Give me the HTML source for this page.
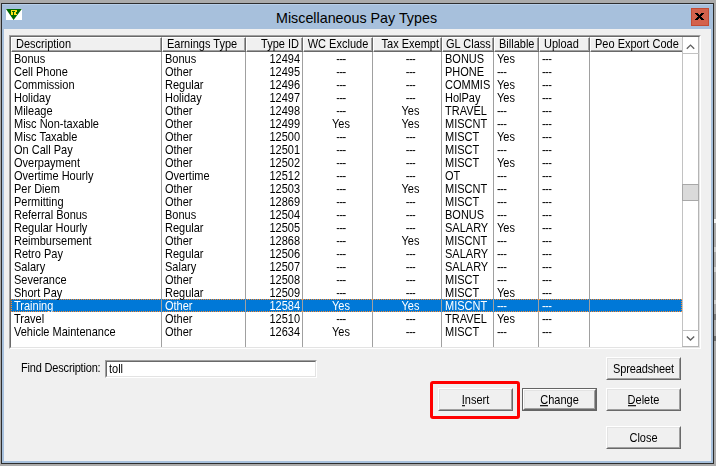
<!DOCTYPE html><html><head><meta charset="utf-8"><style>
*{margin:0;padding:0;box-sizing:border-box}
html,body{width:716px;height:466px;overflow:hidden;background:#ababab;font-family:"Liberation Sans",sans-serif;font-size:11px;color:#000}
.a{position:absolute}
.t{position:absolute;white-space:nowrap;line-height:13px;height:13px;transform:translateY(1px) scaleY(1.125);transform-origin:0 10px;will-change:transform}
.tt{position:absolute;white-space:nowrap}
.frame{left:1px;top:3px;width:713px;height:461px;border:1px solid #2d2d2d;background:#a7c0dc}
.client{left:4px;top:29px;width:707px;height:432px;background:#f0f0f0}
.sunken{border-style:solid;border-width:1px;border-color:#a0a0a0 #fff #fff #a0a0a0}
.sunken2{border-style:solid;border-width:1px;border-color:#696969 #e3e3e3 #e3e3e3 #696969}
.hdr{position:absolute;top:37px;height:15px;background:#f0f0f0;border-style:solid;border-width:1px;border-color:#fff #696969 #696969 #fff}
.hdr i{position:absolute;left:0;top:0;right:0;bottom:0;border-style:solid;border-width:0 1px 1px 0;border-color:#a0a0a0}
.grid{position:absolute;top:52px;width:1px;height:295px;background:#a0a0a0}
.btn{position:absolute;width:75px;height:23px;background:#f0f0f0;border-style:solid;border-width:1px;border-color:#fff #696969 #696969 #fff}
.btn i{position:absolute;left:0;top:0;right:0;bottom:0;border-style:solid;border-width:1px;border-color:#e3e3e3 #a0a0a0 #a0a0a0 #e3e3e3}
.btn span{position:absolute;left:0;right:0;top:4px;text-align:center;line-height:13px;transform:translateY(1px) scaleY(1.125);transform-origin:0 10px;will-change:transform}
.btn u{text-decoration:none;position:relative}
.btn u::after{content:'';position:absolute;left:0;right:0;top:10.89px;height:0.89px;background:#000}
</style></head><body>
<div class="a frame"></div>
<div class="a" style="left:2px;top:4px;width:711px;height:1px;background:#b8cfe9"></div>
<svg class="a" style="left:6px;top:9px" width="16" height="11" viewBox="0 0 16 11">
<rect x="0" y="0" width="16" height="11" fill="#fff"/>
<polygon points="0,0 15.8,0 7.6,11" fill="#006800"/>
<g fill="#ffe41a" shape-rendering="crispEdges"><rect x="5" y="1" width="1" height="1"/><rect x="6" y="1" width="1" height="1"/><rect x="7" y="1" width="1" height="1"/><rect x="8" y="1" width="1" height="1"/><rect x="9" y="1" width="1" height="1"/><rect x="10" y="1" width="1" height="1"/><rect x="5" y="2" width="1" height="1"/><rect x="9" y="2" width="1" height="1"/><rect x="10" y="2" width="1" height="1"/><rect x="5" y="3" width="1" height="1"/><rect x="6" y="3" width="1" height="1"/><rect x="8" y="3" width="1" height="1"/><rect x="9" y="3" width="1" height="1"/><rect x="5" y="4" width="1" height="1"/><rect x="6" y="4" width="1" height="1"/><rect x="8" y="4" width="1" height="1"/><rect x="9" y="4" width="1" height="1"/><rect x="5" y="5" width="1" height="1"/><rect x="6" y="5" width="1" height="1"/><rect x="8" y="5" width="1" height="1"/><rect x="9" y="5" width="1" height="1"/><rect x="10" y="5" width="1" height="1"/></g>
</svg>
<div class="tt" style="left:276px;top:8px;font-size:14.3px;line-height:20px;height:20px">Miscellaneous Pay Types</div>
<div class="a" style="left:691px;top:8px;width:18px;height:18px;background:#d3624c;border:1px solid #c24b34"></div>
<svg class="a" style="left:691px;top:8px" width="18" height="18" shape-rendering="crispEdges"><g fill="#000"><rect x="4" y="5" width="3" height="1"/><rect x="10" y="5" width="3" height="1"/><rect x="5" y="6" width="3" height="1"/><rect x="9" y="6" width="3" height="1"/><rect x="6" y="7" width="5" height="1"/><rect x="7" y="8" width="3" height="1"/><rect x="6" y="9" width="5" height="1"/><rect x="5" y="10" width="3" height="1"/><rect x="9" y="10" width="3" height="1"/><rect x="4" y="11" width="3" height="1"/><rect x="10" y="11" width="3" height="1"/></g></svg>
<div class="a client"></div>
<div class="a sunken" style="left:9px;top:35px;width:692px;height:314px;background:#fff"><div class="sunken2" style="width:690px;height:312px"></div></div>
<div class="hdr" style="left:11px;width:151px"><i></i></div>
<div class="t" style="left:16px;top:37px">Description</div>
<div class="hdr" style="left:162px;width:84px"><i></i></div>
<div class="t" style="left:167px;top:37px">Earnings Type</div>
<div class="hdr" style="left:246px;width:57px"><i></i></div>
<div class="t" style="left:246px;width:53px;top:37px;text-align:right">Type ID</div>
<div class="hdr" style="left:303px;width:70px"><i></i></div>
<div class="t" style="left:303px;width:70px;top:37px;text-align:center">WC Exclude</div>
<div class="hdr" style="left:373px;width:69px"><i></i></div>
<div class="t" style="left:373px;width:66px;top:37px;text-align:right">Tax Exempt</div>
<div class="hdr" style="left:442px;width:52px"><i></i></div>
<div class="t" style="left:446px;top:37px">GL Class</div>
<div class="hdr" style="left:494px;width:45px"><i></i></div>
<div class="t" style="left:499px;top:37px">Billable</div>
<div class="hdr" style="left:539px;width:51px"><i></i></div>
<div class="t" style="left:544px;top:37px">Upload</div>
<div class="hdr" style="left:590px;width:102px;border-right:none"><i style="border-right:none"></i></div>
<div class="t" style="left:595px;top:37px">Peo Export Code</div>
<div class="a" style="left:11px;top:299px;width:671px;height:13px;background:#0078d7"></div>
<div class="a" style="left:11px;top:299px;width:671px;height:13px;border:1px dotted #ff8a2a"></div>
<div class="grid" style="left:161px"></div>
<div class="grid" style="left:245px"></div>
<div class="grid" style="left:302px"></div>
<div class="grid" style="left:372px"></div>
<div class="grid" style="left:441px"></div>
<div class="grid" style="left:493px"></div>
<div class="grid" style="left:538px"></div>
<div class="grid" style="left:589px"></div>
<div class="t" style="left:14px;top:52px;color:#000">Bonus</div>
<div class="t" style="left:165px;top:52px;color:#000">Bonus</div>
<div class="t" style="left:246px;width:54px;top:52px;text-align:right;color:#000">12494</div>
<div class="t" style="left:306px;width:70px;top:52px;text-align:center;color:#000"><span style="letter-spacing:-0.55px">---</span></div>
<div class="t" style="left:376px;width:69px;top:52px;text-align:center;color:#000"><span style="letter-spacing:-0.55px">---</span></div>
<div class="t" style="left:445px;top:52px;color:#000">BONUS</div>
<div class="t" style="left:497px;top:52px;color:#000">Yes</div>
<div class="t" style="left:542px;top:52px;color:#000"><span style="letter-spacing:-0.55px">---</span></div>
<div class="t" style="left:14px;top:65px;color:#000">Cell Phone</div>
<div class="t" style="left:165px;top:65px;color:#000">Other</div>
<div class="t" style="left:246px;width:54px;top:65px;text-align:right;color:#000">12495</div>
<div class="t" style="left:306px;width:70px;top:65px;text-align:center;color:#000"><span style="letter-spacing:-0.55px">---</span></div>
<div class="t" style="left:376px;width:69px;top:65px;text-align:center;color:#000"><span style="letter-spacing:-0.55px">---</span></div>
<div class="t" style="left:445px;top:65px;color:#000">PHONE</div>
<div class="t" style="left:497px;top:65px;color:#000"><span style="letter-spacing:-0.55px">---</span></div>
<div class="t" style="left:542px;top:65px;color:#000"><span style="letter-spacing:-0.55px">---</span></div>
<div class="t" style="left:14px;top:78px;color:#000">Commission</div>
<div class="t" style="left:165px;top:78px;color:#000">Regular</div>
<div class="t" style="left:246px;width:54px;top:78px;text-align:right;color:#000">12496</div>
<div class="t" style="left:306px;width:70px;top:78px;text-align:center;color:#000"><span style="letter-spacing:-0.55px">---</span></div>
<div class="t" style="left:376px;width:69px;top:78px;text-align:center;color:#000"><span style="letter-spacing:-0.55px">---</span></div>
<div class="t" style="left:445px;top:78px;color:#000">COMMIS</div>
<div class="t" style="left:497px;top:78px;color:#000">Yes</div>
<div class="t" style="left:542px;top:78px;color:#000"><span style="letter-spacing:-0.55px">---</span></div>
<div class="t" style="left:14px;top:91px;color:#000">Holiday</div>
<div class="t" style="left:165px;top:91px;color:#000">Holiday</div>
<div class="t" style="left:246px;width:54px;top:91px;text-align:right;color:#000">12497</div>
<div class="t" style="left:306px;width:70px;top:91px;text-align:center;color:#000"><span style="letter-spacing:-0.55px">---</span></div>
<div class="t" style="left:376px;width:69px;top:91px;text-align:center;color:#000"><span style="letter-spacing:-0.55px">---</span></div>
<div class="t" style="left:445px;top:91px;color:#000">HolPay</div>
<div class="t" style="left:497px;top:91px;color:#000">Yes</div>
<div class="t" style="left:542px;top:91px;color:#000"><span style="letter-spacing:-0.55px">---</span></div>
<div class="t" style="left:14px;top:104px;color:#000">Mileage</div>
<div class="t" style="left:165px;top:104px;color:#000">Other</div>
<div class="t" style="left:246px;width:54px;top:104px;text-align:right;color:#000">12498</div>
<div class="t" style="left:306px;width:70px;top:104px;text-align:center;color:#000"><span style="letter-spacing:-0.55px">---</span></div>
<div class="t" style="left:376px;width:69px;top:104px;text-align:center;color:#000">Yes</div>
<div class="t" style="left:445px;top:104px;color:#000">TRAVEL</div>
<div class="t" style="left:497px;top:104px;color:#000"><span style="letter-spacing:-0.55px">---</span></div>
<div class="t" style="left:542px;top:104px;color:#000"><span style="letter-spacing:-0.55px">---</span></div>
<div class="t" style="left:14px;top:117px;color:#000">Misc Non-taxable</div>
<div class="t" style="left:165px;top:117px;color:#000">Other</div>
<div class="t" style="left:246px;width:54px;top:117px;text-align:right;color:#000">12499</div>
<div class="t" style="left:306px;width:70px;top:117px;text-align:center;color:#000">Yes</div>
<div class="t" style="left:376px;width:69px;top:117px;text-align:center;color:#000">Yes</div>
<div class="t" style="left:445px;top:117px;color:#000">MISCNT</div>
<div class="t" style="left:497px;top:117px;color:#000"><span style="letter-spacing:-0.55px">---</span></div>
<div class="t" style="left:542px;top:117px;color:#000"><span style="letter-spacing:-0.55px">---</span></div>
<div class="t" style="left:14px;top:130px;color:#000">Misc Taxable</div>
<div class="t" style="left:165px;top:130px;color:#000">Other</div>
<div class="t" style="left:246px;width:54px;top:130px;text-align:right;color:#000">12500</div>
<div class="t" style="left:306px;width:70px;top:130px;text-align:center;color:#000"><span style="letter-spacing:-0.55px">---</span></div>
<div class="t" style="left:376px;width:69px;top:130px;text-align:center;color:#000"><span style="letter-spacing:-0.55px">---</span></div>
<div class="t" style="left:445px;top:130px;color:#000">MISCT</div>
<div class="t" style="left:497px;top:130px;color:#000">Yes</div>
<div class="t" style="left:542px;top:130px;color:#000"><span style="letter-spacing:-0.55px">---</span></div>
<div class="t" style="left:14px;top:143px;color:#000">On Call Pay</div>
<div class="t" style="left:165px;top:143px;color:#000">Other</div>
<div class="t" style="left:246px;width:54px;top:143px;text-align:right;color:#000">12501</div>
<div class="t" style="left:306px;width:70px;top:143px;text-align:center;color:#000"><span style="letter-spacing:-0.55px">---</span></div>
<div class="t" style="left:376px;width:69px;top:143px;text-align:center;color:#000"><span style="letter-spacing:-0.55px">---</span></div>
<div class="t" style="left:445px;top:143px;color:#000">MISCT</div>
<div class="t" style="left:497px;top:143px;color:#000"><span style="letter-spacing:-0.55px">---</span></div>
<div class="t" style="left:542px;top:143px;color:#000"><span style="letter-spacing:-0.55px">---</span></div>
<div class="t" style="left:14px;top:156px;color:#000">Overpayment</div>
<div class="t" style="left:165px;top:156px;color:#000">Other</div>
<div class="t" style="left:246px;width:54px;top:156px;text-align:right;color:#000">12502</div>
<div class="t" style="left:306px;width:70px;top:156px;text-align:center;color:#000"><span style="letter-spacing:-0.55px">---</span></div>
<div class="t" style="left:376px;width:69px;top:156px;text-align:center;color:#000"><span style="letter-spacing:-0.55px">---</span></div>
<div class="t" style="left:445px;top:156px;color:#000">MISCT</div>
<div class="t" style="left:497px;top:156px;color:#000">Yes</div>
<div class="t" style="left:542px;top:156px;color:#000"><span style="letter-spacing:-0.55px">---</span></div>
<div class="t" style="left:14px;top:169px;color:#000">Overtime Hourly</div>
<div class="t" style="left:165px;top:169px;color:#000">Overtime</div>
<div class="t" style="left:246px;width:54px;top:169px;text-align:right;color:#000">12512</div>
<div class="t" style="left:306px;width:70px;top:169px;text-align:center;color:#000"><span style="letter-spacing:-0.55px">---</span></div>
<div class="t" style="left:376px;width:69px;top:169px;text-align:center;color:#000"><span style="letter-spacing:-0.55px">---</span></div>
<div class="t" style="left:445px;top:169px;color:#000">OT</div>
<div class="t" style="left:497px;top:169px;color:#000"><span style="letter-spacing:-0.55px">---</span></div>
<div class="t" style="left:542px;top:169px;color:#000"><span style="letter-spacing:-0.55px">---</span></div>
<div class="t" style="left:14px;top:182px;color:#000">Per Diem</div>
<div class="t" style="left:165px;top:182px;color:#000">Other</div>
<div class="t" style="left:246px;width:54px;top:182px;text-align:right;color:#000">12503</div>
<div class="t" style="left:306px;width:70px;top:182px;text-align:center;color:#000"><span style="letter-spacing:-0.55px">---</span></div>
<div class="t" style="left:376px;width:69px;top:182px;text-align:center;color:#000">Yes</div>
<div class="t" style="left:445px;top:182px;color:#000">MISCNT</div>
<div class="t" style="left:497px;top:182px;color:#000"><span style="letter-spacing:-0.55px">---</span></div>
<div class="t" style="left:542px;top:182px;color:#000"><span style="letter-spacing:-0.55px">---</span></div>
<div class="t" style="left:14px;top:195px;color:#000">Permitting</div>
<div class="t" style="left:165px;top:195px;color:#000">Other</div>
<div class="t" style="left:246px;width:54px;top:195px;text-align:right;color:#000">12869</div>
<div class="t" style="left:306px;width:70px;top:195px;text-align:center;color:#000"><span style="letter-spacing:-0.55px">---</span></div>
<div class="t" style="left:376px;width:69px;top:195px;text-align:center;color:#000"><span style="letter-spacing:-0.55px">---</span></div>
<div class="t" style="left:445px;top:195px;color:#000">MISCT</div>
<div class="t" style="left:497px;top:195px;color:#000"><span style="letter-spacing:-0.55px">---</span></div>
<div class="t" style="left:542px;top:195px;color:#000"><span style="letter-spacing:-0.55px">---</span></div>
<div class="t" style="left:14px;top:208px;color:#000">Referral Bonus</div>
<div class="t" style="left:165px;top:208px;color:#000">Bonus</div>
<div class="t" style="left:246px;width:54px;top:208px;text-align:right;color:#000">12504</div>
<div class="t" style="left:306px;width:70px;top:208px;text-align:center;color:#000"><span style="letter-spacing:-0.55px">---</span></div>
<div class="t" style="left:376px;width:69px;top:208px;text-align:center;color:#000"><span style="letter-spacing:-0.55px">---</span></div>
<div class="t" style="left:445px;top:208px;color:#000">BONUS</div>
<div class="t" style="left:497px;top:208px;color:#000"><span style="letter-spacing:-0.55px">---</span></div>
<div class="t" style="left:542px;top:208px;color:#000"><span style="letter-spacing:-0.55px">---</span></div>
<div class="t" style="left:14px;top:221px;color:#000">Regular Hourly</div>
<div class="t" style="left:165px;top:221px;color:#000">Regular</div>
<div class="t" style="left:246px;width:54px;top:221px;text-align:right;color:#000">12505</div>
<div class="t" style="left:306px;width:70px;top:221px;text-align:center;color:#000"><span style="letter-spacing:-0.55px">---</span></div>
<div class="t" style="left:376px;width:69px;top:221px;text-align:center;color:#000"><span style="letter-spacing:-0.55px">---</span></div>
<div class="t" style="left:445px;top:221px;color:#000">SALARY</div>
<div class="t" style="left:497px;top:221px;color:#000">Yes</div>
<div class="t" style="left:542px;top:221px;color:#000"><span style="letter-spacing:-0.55px">---</span></div>
<div class="t" style="left:14px;top:234px;color:#000">Reimbursement</div>
<div class="t" style="left:165px;top:234px;color:#000">Other</div>
<div class="t" style="left:246px;width:54px;top:234px;text-align:right;color:#000">12868</div>
<div class="t" style="left:306px;width:70px;top:234px;text-align:center;color:#000"><span style="letter-spacing:-0.55px">---</span></div>
<div class="t" style="left:376px;width:69px;top:234px;text-align:center;color:#000">Yes</div>
<div class="t" style="left:445px;top:234px;color:#000">MISCNT</div>
<div class="t" style="left:497px;top:234px;color:#000"><span style="letter-spacing:-0.55px">---</span></div>
<div class="t" style="left:542px;top:234px;color:#000"><span style="letter-spacing:-0.55px">---</span></div>
<div class="t" style="left:14px;top:247px;color:#000">Retro Pay</div>
<div class="t" style="left:165px;top:247px;color:#000">Regular</div>
<div class="t" style="left:246px;width:54px;top:247px;text-align:right;color:#000">12506</div>
<div class="t" style="left:306px;width:70px;top:247px;text-align:center;color:#000"><span style="letter-spacing:-0.55px">---</span></div>
<div class="t" style="left:376px;width:69px;top:247px;text-align:center;color:#000"><span style="letter-spacing:-0.55px">---</span></div>
<div class="t" style="left:445px;top:247px;color:#000">SALARY</div>
<div class="t" style="left:497px;top:247px;color:#000"><span style="letter-spacing:-0.55px">---</span></div>
<div class="t" style="left:542px;top:247px;color:#000"><span style="letter-spacing:-0.55px">---</span></div>
<div class="t" style="left:14px;top:260px;color:#000">Salary</div>
<div class="t" style="left:165px;top:260px;color:#000">Salary</div>
<div class="t" style="left:246px;width:54px;top:260px;text-align:right;color:#000">12507</div>
<div class="t" style="left:306px;width:70px;top:260px;text-align:center;color:#000"><span style="letter-spacing:-0.55px">---</span></div>
<div class="t" style="left:376px;width:69px;top:260px;text-align:center;color:#000"><span style="letter-spacing:-0.55px">---</span></div>
<div class="t" style="left:445px;top:260px;color:#000">SALARY</div>
<div class="t" style="left:497px;top:260px;color:#000"><span style="letter-spacing:-0.55px">---</span></div>
<div class="t" style="left:542px;top:260px;color:#000"><span style="letter-spacing:-0.55px">---</span></div>
<div class="t" style="left:14px;top:273px;color:#000">Severance</div>
<div class="t" style="left:165px;top:273px;color:#000">Other</div>
<div class="t" style="left:246px;width:54px;top:273px;text-align:right;color:#000">12508</div>
<div class="t" style="left:306px;width:70px;top:273px;text-align:center;color:#000"><span style="letter-spacing:-0.55px">---</span></div>
<div class="t" style="left:376px;width:69px;top:273px;text-align:center;color:#000"><span style="letter-spacing:-0.55px">---</span></div>
<div class="t" style="left:445px;top:273px;color:#000">MISCT</div>
<div class="t" style="left:497px;top:273px;color:#000"><span style="letter-spacing:-0.55px">---</span></div>
<div class="t" style="left:542px;top:273px;color:#000"><span style="letter-spacing:-0.55px">---</span></div>
<div class="t" style="left:14px;top:286px;color:#000">Short Pay</div>
<div class="t" style="left:165px;top:286px;color:#000">Regular</div>
<div class="t" style="left:246px;width:54px;top:286px;text-align:right;color:#000">12509</div>
<div class="t" style="left:306px;width:70px;top:286px;text-align:center;color:#000"><span style="letter-spacing:-0.55px">---</span></div>
<div class="t" style="left:376px;width:69px;top:286px;text-align:center;color:#000"><span style="letter-spacing:-0.55px">---</span></div>
<div class="t" style="left:445px;top:286px;color:#000">MISCT</div>
<div class="t" style="left:497px;top:286px;color:#000">Yes</div>
<div class="t" style="left:542px;top:286px;color:#000"><span style="letter-spacing:-0.55px">---</span></div>
<div class="t" style="left:14px;top:299px;color:#fff">Training</div>
<div class="t" style="left:165px;top:299px;color:#fff">Other</div>
<div class="t" style="left:246px;width:54px;top:299px;text-align:right;color:#fff">12584</div>
<div class="t" style="left:306px;width:70px;top:299px;text-align:center;color:#fff">Yes</div>
<div class="t" style="left:376px;width:69px;top:299px;text-align:center;color:#fff">Yes</div>
<div class="t" style="left:445px;top:299px;color:#fff">MISCNT</div>
<div class="t" style="left:497px;top:299px;color:#fff"><span style="letter-spacing:-0.55px">---</span></div>
<div class="t" style="left:542px;top:299px;color:#fff"><span style="letter-spacing:-0.55px">---</span></div>
<div class="t" style="left:14px;top:312px;color:#000">Travel</div>
<div class="t" style="left:165px;top:312px;color:#000">Other</div>
<div class="t" style="left:246px;width:54px;top:312px;text-align:right;color:#000">12510</div>
<div class="t" style="left:306px;width:70px;top:312px;text-align:center;color:#000"><span style="letter-spacing:-0.55px">---</span></div>
<div class="t" style="left:376px;width:69px;top:312px;text-align:center;color:#000"><span style="letter-spacing:-0.55px">---</span></div>
<div class="t" style="left:445px;top:312px;color:#000">TRAVEL</div>
<div class="t" style="left:497px;top:312px;color:#000">Yes</div>
<div class="t" style="left:542px;top:312px;color:#000"><span style="letter-spacing:-0.55px">---</span></div>
<div class="t" style="left:14px;top:325px;color:#000">Vehicle Maintenance</div>
<div class="t" style="left:165px;top:325px;color:#000">Other</div>
<div class="t" style="left:246px;width:54px;top:325px;text-align:right;color:#000">12634</div>
<div class="t" style="left:306px;width:70px;top:325px;text-align:center;color:#000">Yes</div>
<div class="t" style="left:376px;width:69px;top:325px;text-align:center;color:#000"><span style="letter-spacing:-0.55px">---</span></div>
<div class="t" style="left:445px;top:325px;color:#000">MISCT</div>
<div class="t" style="left:497px;top:325px;color:#000"><span style="letter-spacing:-0.55px">---</span></div>
<div class="t" style="left:542px;top:325px;color:#000"><span style="letter-spacing:-0.55px">---</span></div>
<div class="a" style="left:682px;top:37px;width:17px;height:310px;background:#fff;border-left:1px solid #c2c2c2;border-right:1px solid #b4b4b4"></div>
<div class="a" style="left:682px;top:53px;width:17px;height:1px;background:#c2c2c2"></div>
<div class="a" style="left:682px;top:330px;width:17px;height:1px;background:#c2c2c2"></div>
<div class="a" style="left:682px;top:346px;width:17px;height:1px;background:#b4b4b4"></div>
<div class="a" style="left:682px;top:184px;width:17px;height:17px;background:#dadada;border:1px solid #a8a8a8"></div>
<svg class="a" style="left:682px;top:37px" width="17" height="17"><path d="M4.8 11.8 L8.5 8.1 L12.2 11.8" fill="none" stroke="#606060" stroke-width="1.35"/></svg>
<svg class="a" style="left:682px;top:330px" width="17" height="17"><path d="M4.8 6.4 L8.5 10.1 L12.2 6.4" fill="none" stroke="#606060" stroke-width="1.35"/></svg>
<div class="t" style="left:21px;top:361px;letter-spacing:-0.18px">Find Description:</div>
<div class="a sunken" style="left:105px;top:360px;width:212px;height:18px;background:#fff"><div class="sunken2" style="width:210px;height:16px"></div></div>
<div class="t" style="left:109px;top:362px">toll</div>
<div class="btn" style="left:606px;top:357px"><i></i><span><b style="font-weight:normal;letter-spacing:-0.14px">Spreadsheet</b></span></div>
<div class="btn" style="left:438px;top:388px"><i></i><span><u>I</u>nsert</span></div>
<div class="a" style="left:522px;top:388px;width:75px;height:23px;border:1px solid #646464"></div>
<div class="btn" style="left:523px;top:389px;width:73px;height:21px"><i></i><span style="top:3px"><u>C</u>hange</span></div>
<div class="btn" style="left:606px;top:388px"><i></i><span><u>D</u>elete</span></div>
<div class="btn" style="left:606px;top:426px"><i></i><span>Close</span></div>
<div class="a" style="left:430px;top:381px;width:90px;height:38px;border:3px solid #ff0000;border-radius:3px"></div>
<div class="a" style="left:714px;top:219px;width:2px;height:4px;background:#f4f4f4"></div>
<div class="a" style="left:714px;top:247px;width:2px;height:5px;background:#d0d0d0"></div>
<div class="a" style="left:714px;top:267px;width:2px;height:5px;background:#d0d0d0"></div>
<div class="a" style="left:714px;top:300px;width:2px;height:4px;background:#d0d0d0"></div>
<div class="a" style="left:714px;top:314px;width:2px;height:6px;background:#7a7a7a"></div>
<div class="a" style="left:714px;top:336px;width:2px;height:5px;background:#6e6e6e"></div>
</body></html>
